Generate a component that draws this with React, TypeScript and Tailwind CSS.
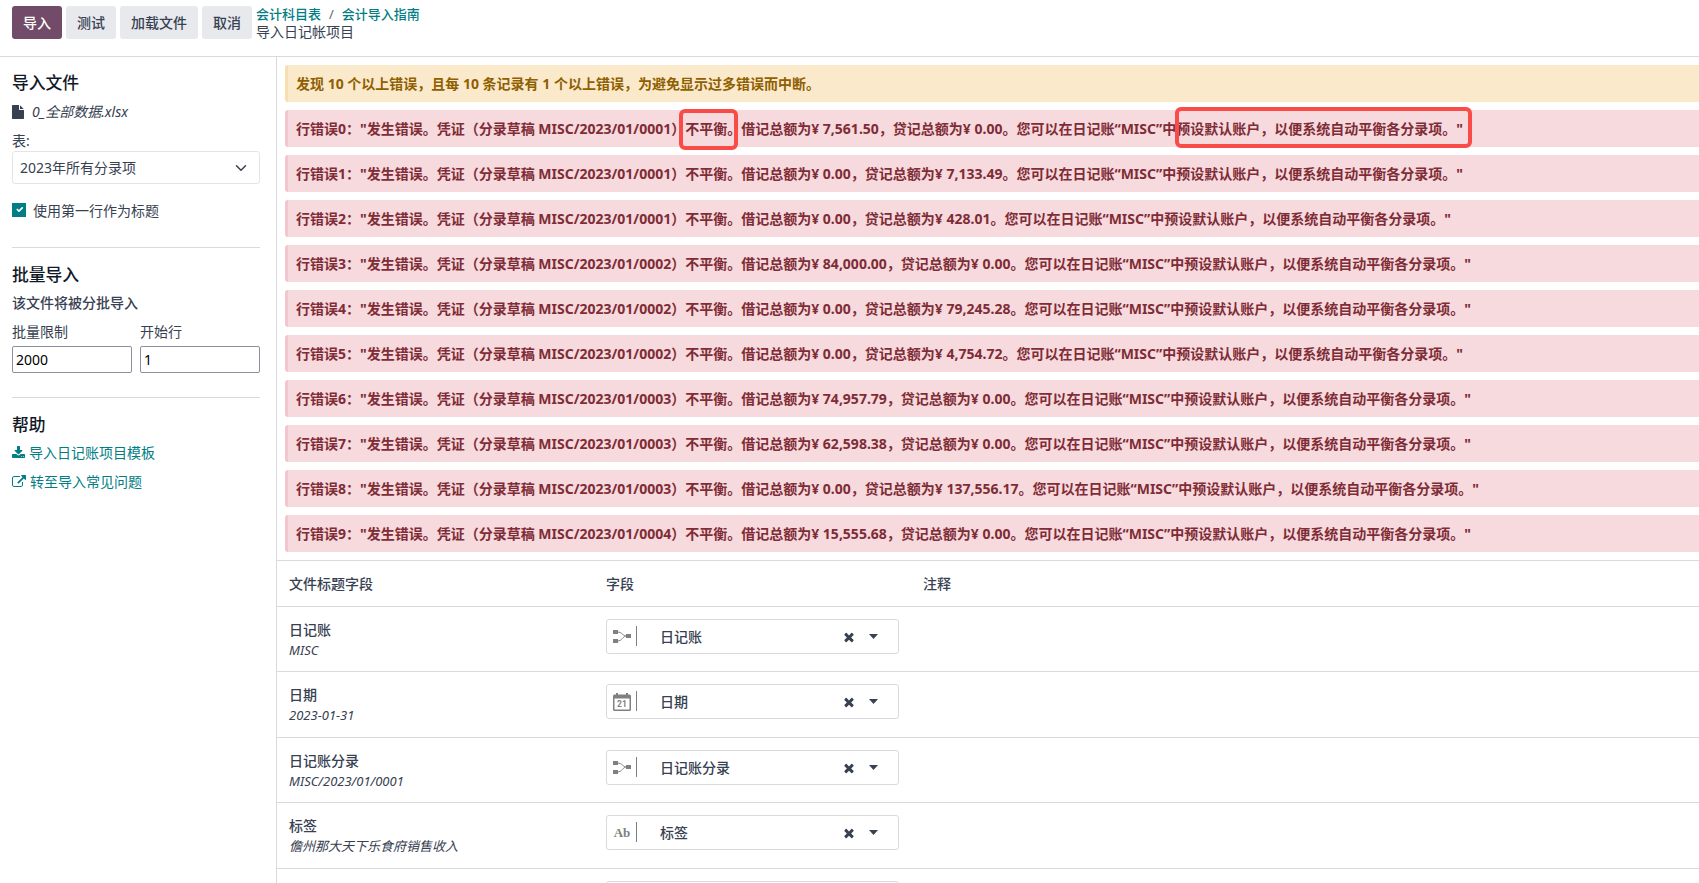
import clsx from "clsx"
import { PropsWithChildren } from "react"

const errors = [
  { move: "0001", debit: "7,561.50", credit: "0.00" },
  { move: "0001", debit: "0.00", credit: "7,133.49" },
  { move: "0001", debit: "0.00", credit: "428.01" },
  { move: "0002", debit: "84,000.00", credit: "0.00" },
  { move: "0002", debit: "0.00", credit: "79,245.28" },
  { move: "0002", debit: "0.00", credit: "4,754.72" },
  { move: "0003", debit: "74,957.79", credit: "0.00" },
  { move: "0003", debit: "62,598.38", credit: "0.00" },
  { move: "0003", debit: "0.00", credit: "137,556.17" },
  { move: "0004", debit: "15,555.68", credit: "0.00" },
]

type FieldType = "relation" | "date" | "char"

const rows: { name: string; sample: string; type: FieldType }[] = [
  { name: "日记账", sample: "MISC", type: "relation" },
  { name: "日期", sample: "2023-01-31", type: "date" },
  { name: "日记账分录", sample: "MISC/2023/01/0001", type: "relation" },
  { name: "标签", sample: "儋州那大天下乐食府销售收入", type: "char" },
  { name: "", sample: "", type: "relation" },
]

// Font Awesome 4 glyphs
const FileIcon = () => (
  <svg className="h-[14px] w-[12px]" viewBox="0 0 1536 1792" fill="currentColor">
    <path d="M1024 512v-472q22 14 36 28l408 408q14 14 28 36h-472zm-128 32q0 40 28 68t68 28h544v1056q0 40-28 68t-68 28h-1344q-40 0-68-28t-28-68v-1600q0-40 28-68t68-28h800v544z" />
  </svg>
)

const DownloadIcon = () => (
  <svg className="size-[14px]" viewBox="64 0 1792 1792" fill="currentColor">
    <path d="M1344 1344q0-26-19-45t-45-19-45 19-19 45 19 45 45 19 45-19 19-45zm256 0q0-26-19-45t-45-19-45 19-19 45 19 45 45 19 45-19 19-45zm128-224v320q0 40-28 68t-68 28h-1472q-40 0-68-28t-28-68v-320q0-40 28-68t68-28h465l135 136q58 56 136 56t136-56l136-136h464q40 0 68 28t28 68zm-325-569q17 41-14 70l-448 448q-18 19-45 19t-45-19l-448-448q-31-29-14-70 17-39 59-39h256v-448q0-26 19-45t45-19h256q26 0 45 19t19 45v448h256q42 0 59 39z" />
  </svg>
)

const ExternalLinkIcon = () => (
  <svg className="size-[14px]" viewBox="0 0 1792 1792" fill="currentColor">
    <path d="M1408 928v320q0 119-84.5 203.5t-203.5 84.5h-832q-119 0-203.5-84.5t-84.5-203.5v-832q0-119 84.5-203.5t203.5-84.5h704q14 0 23 9t9 23v64q0 14-9 23t-23 9h-704q-66 0-113 47t-47 113v832q0 66 47 113t113 47h832q66 0 113-47t47-113v-320q0-14 9-23t23-9h64q14 0 23 9t9 23zm384-864v512q0 26-19 45t-45 19-45-19l-176-176-652 652q-10 10-23 10t-23-10l-114-114q-10-10-10-23t10-23l652-652-176-176q-19-19-19-45t19-45 45-19h512q26 0 45 19t19 45z" />
  </svg>
)

const TimesIcon = () => (
  <svg className="size-[14px]" viewBox="0 0 1792 1792" fill="currentColor">
    <path d="M1490 1322q0 40-28 68l-136 136q-28 28-68 28t-68-28l-294-294-294 294q-28 28-68 28t-68-28l-136-136q-28-28-28-68t28-68l294-294-294-294q-28-28-28-68t28-68l136-136q28-28 68-28t68 28l294 294 294-294q28-28 68-28t68 28l136 136q28 28 28 68t-28 68l-294 294 294 294q28 28 28 68z" />
  </svg>
)

const FieldIcon: React.FC<{ type: FieldType }> = ({ type }) => {
  if (type === "relation")
    return (
      <svg className="mt-px size-[18px]" viewBox="0 0 18 18">
        <path
          d="M4 4C10 4 9 8 14 8C9 8 10 13 4 13"
          fill="none"
          stroke="#808080"
          strokeWidth="1"
        />
        <path d="M0 2h5v4H0zM0 11h5v4H0zM13 6h5v4h-5z" fill="#808080" />
      </svg>
    )

  if (type === "date")
    return (
      <svg className="mt-px size-[18px]" viewBox="0 0 18 18">
        <path
          fillRule="evenodd"
          d="M3 0h2v1.5h8V0h2v1.5h1.5A1.5 1.5 0 0 1 18 3v13.5a1.5 1.5 0 0 1-1.5 1.5h-15A1.5 1.5 0 0 1 0 16.5V3a1.5 1.5 0 0 1 1.5-1.5H3zM1.5 5.5v11h15v-11z"
          fill="#808080"
        />
        <text
          x="9"
          y="14"
          textAnchor="middle"
          className="font-['Roboto'] text-[8.5px] font-bold"
          fill="#808080"
        >
          21
        </text>
      </svg>
    )

  return (
    <span className="w-[18px] text-center font-['Liberation_Serif',serif] text-[13px] leading-[18px] font-bold text-[#808080]">
      Ab
    </span>
  )
}

const Button: React.FC<PropsWithChildren<{ primary?: boolean }>> = ({
  primary,
  children,
}) => (
  <button
    className={clsx(
      "h-[33px] rounded-[3px] px-[11px] font-medium",
      primary ? "bg-[#714b67] text-white" : "bg-[#e7e9ed] text-[#374151]",
    )}
  >
    {children}
  </button>
)

const Header = () => (
  <header className="flex h-[57px] shrink-0 items-start border-b border-[#d8dadd] pt-[6px] pl-3">
    <div className="flex gap-1">
      <Button primary>导入</Button>
      <Button>测试</Button>
      <Button>加载文件</Button>
      <Button>取消</Button>
    </div>
    <div className="ml-1 flex flex-col">
      <div className="flex h-[17px] items-center text-[13px] font-medium text-[#017e84]">
        <span>会计科目表</span>
        <span className="mx-2 font-normal text-[#5f636f]">/</span>
        <span>会计导入指南</span>
      </div>
      <div className="h-[18px] leading-[18px]">导入日记帐项目</div>
    </div>
  </header>
)

const SideTitle: React.FC<PropsWithChildren> = ({ children }) => (
  <h3 className="h-[25px] text-[16.8px] leading-[25px] font-medium text-[#111827]">
    {children}
  </h3>
)

const NumberField: React.FC<{ label: string; value: string }> = ({
  label,
  value,
}) => (
  <label className="flex w-[120px] flex-col gap-1">
    <span className="h-[21px] leading-[21px]">{label}</span>
    <input
      className="h-[27px] rounded-[2px] border border-[#8f8f9d] px-[3px] text-black"
      defaultValue={value}
    />
  </label>
)

const Sidebar = () => (
  <aside className="flex w-[277px] shrink-0 flex-col border-r border-[#d8dadd] pt-[13px] pr-4 pl-3">
    <SideTitle>导入文件</SideTitle>
    <div className="mt-[6px] flex h-[21px] items-center gap-2">
      <FileIcon />
      <span className="italic">0_全部数据.xlsx</span>
    </div>
    <div className="mt-2 h-[21px] leading-[21px]">表:</div>
    <div className="flex h-[33px] items-center justify-between rounded-[3px] border border-[#e2e4e7] pr-3 pl-[7px]">
      <span>2023年所有分录项</span>
      <svg className="size-3" viewBox="0 0 16 16" fill="none">
        <path
          d="m2 5 6 6 6-6"
          stroke="#374151"
          strokeWidth="2"
          strokeLinecap="round"
          strokeLinejoin="round"
        />
      </svg>
    </div>
    <div className="mt-4 flex h-[21px] items-center gap-[7px]">
      <span className="mb-[2px] flex size-[14px] items-center justify-center bg-[#017e84]">
        <svg className="size-[11px]" viewBox="0 0 20 20" fill="none">
          <path
            d="m6 10 3 3 6-6"
            stroke="#fff"
            strokeWidth="3"
            strokeLinecap="round"
            strokeLinejoin="round"
          />
        </svg>
      </span>
      <span>使用第一行作为标题</span>
    </div>

    <hr className="mt-[26px] border-[#d8dadd]" />

    <div className="mt-[14px]">
      <SideTitle>批量导入</SideTitle>
    </div>
    <div className="mt-[5px] h-[21px] leading-[21px] font-medium">
      该文件将被分批导入
    </div>
    <div className="mt-2 flex gap-2">
      <NumberField label="批量限制" value="2000" />
      <NumberField label="开始行" value="1" />
    </div>

    <hr className="mt-6 border-[#d8dadd]" />

    <div className="mt-[14px]">
      <SideTitle>帮助</SideTitle>
    </div>
    <a className="mt-[5px] flex h-[21px] items-center gap-[3px] text-[#017e84]">
      <DownloadIcon />
      导入日记账项目模板
    </a>
    <a className="mt-2 flex h-[21px] items-center gap-1 text-[#017e84]">
      <ExternalLinkIcon />
      转至导入常见问题
    </a>
  </aside>
)

const Alerts = () => (
  <div className="relative flex flex-col gap-2 py-2 pl-2 font-bold whitespace-nowrap">
    <div className="h-[37px] rounded-l-[3px] border-l-[3px] border-[#f8dfb1] bg-[#fbe9cc] pl-2 leading-[37px] text-[#8f5f00]">
      发现 10 个以上错误，且每 10 条记录有 1 个以上错误，为避免显示过多错误而中断。
    </div>
    {errors.map(({ move, debit, credit }, i) => (
      <div
        key={i}
        className="h-[37px] rounded-l-[3px] border-l-[3px] border-[#f2c6cc] bg-[#f6dade] pl-2 leading-[37px] text-[#7f2c36]"
      >
        {`行错误${i}："发生错误。凭证（分录草稿 MISC/2023/01/${move}）不平衡。借记总额为¥ ${debit}，贷记总额为¥ ${credit}。您可以在日记账“MISC”中预设默认账户，以便系统自动平衡各分录项。"`}
      </div>
    ))}
    {/* highlight marks over the first error */}
    <div className="absolute top-[52px] left-[402px] h-[41px] w-[59px] rounded-[6px] border-4 border-[#f94b48]" />
    <div className="absolute top-[50px] left-[898px] h-[41px] w-[297px] rounded-[6px] border-4 border-[#f94b48]" />
  </div>
)

const FieldSelect: React.FC<{ name: string; type: FieldType }> = ({
  name,
  type,
}) => (
  <div className="flex h-[35px] w-[293px] items-center rounded-[3px] border border-[#d8dadd] pl-[6px]">
    <FieldIcon type={type} />
    <span className="mb-px ml-[5px] h-5 w-px bg-[#808080]" />
    <span className="ml-[23px] flex-1 font-medium">{name}</span>
    <TimesIcon />
    <svg className="mr-5 ml-[13px] h-[5px] w-[9px]" viewBox="0 0 9 5">
      <path d="M0 0h9L4.5 5z" fill="#374151" />
    </svg>
  </div>
)

const Mapping = () => (
  <div className="border-t border-[#d8dadd]">
    <div className="grid h-[46px] grid-cols-[317px_317px_1fr] items-center border-b border-[#d8dadd] pl-3 font-medium">
      <div>文件标题字段</div>
      <div>字段</div>
      <div>注释</div>
    </div>
    {rows.map(({ name, sample, type }, i) => (
      <div
        key={i}
        className="grid h-[66px] grid-cols-[317px_317px_1fr] border-b border-[#d8dadd] pt-3 pl-3 odd:h-[66px] even:h-[65px]"
      >
        <div>
          <div className="h-[21px] leading-[21px] font-medium">{name}</div>
          <div className="h-5 text-[13px] leading-5 italic">{sample}</div>
        </div>
        <FieldSelect name={name} type={type} />
      </div>
    ))}
  </div>
)

export default function App() {
  return (
    <div
      lang="zh-CN"
      className="flex h-[883px] flex-col overflow-hidden bg-white font-['Noto_Sans','Noto_Sans_CJK_SC',sans-serif] text-[14px] leading-[21px] text-[#374151]"
    >
      <Header />
      <div className="flex min-h-0 flex-1">
        <Sidebar />
        <main className="min-w-0 flex-1 overflow-hidden">
          <Alerts />
          <Mapping />
        </main>
      </div>
    </div>
  )
}
